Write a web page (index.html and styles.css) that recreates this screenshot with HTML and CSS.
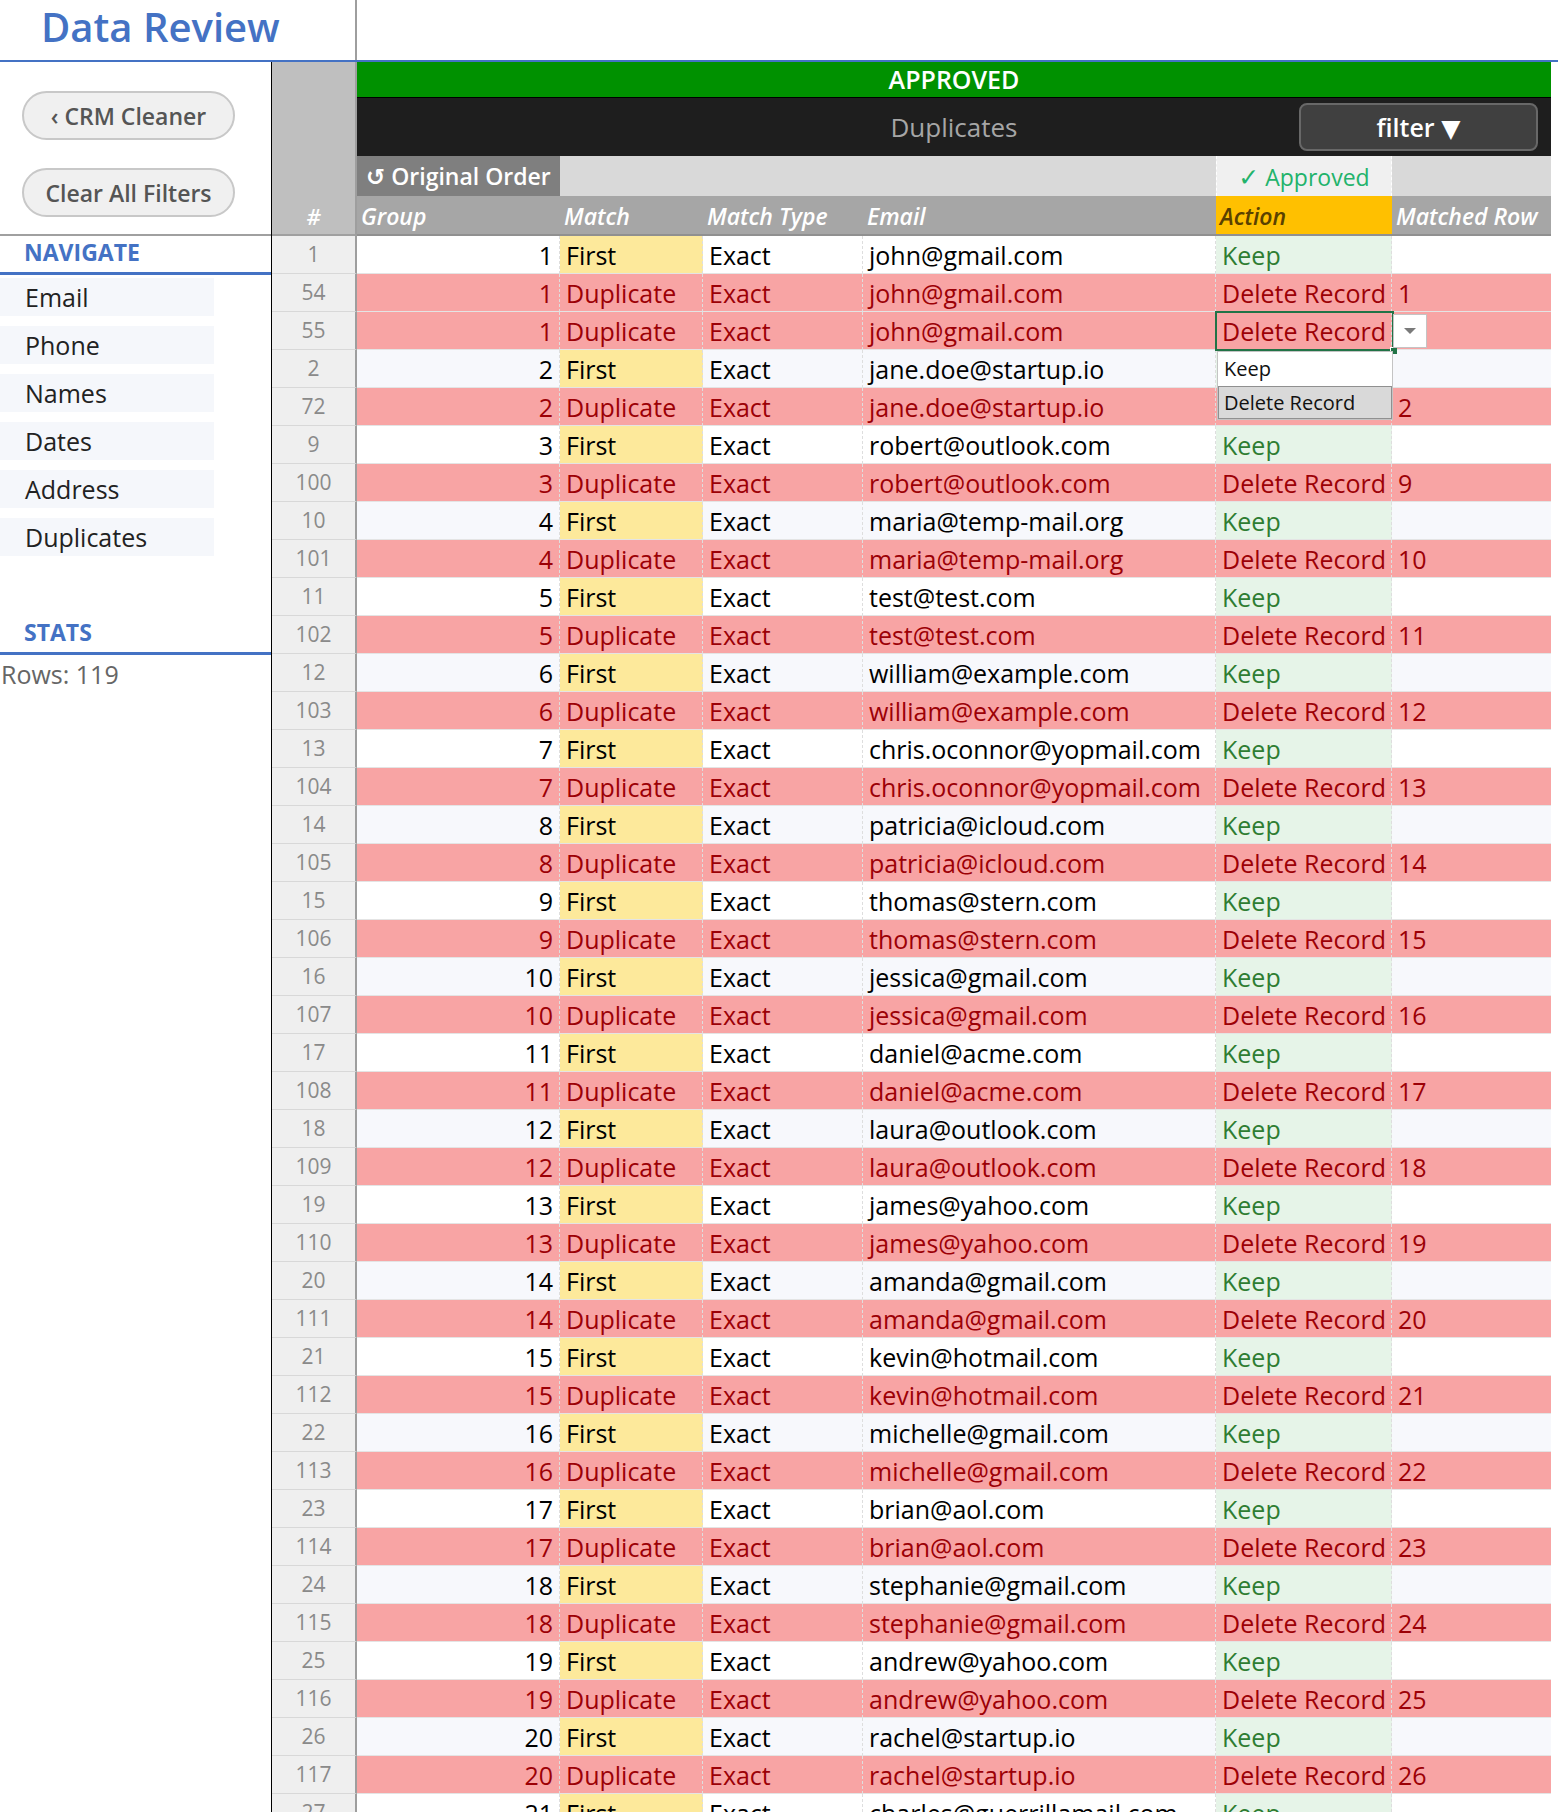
FILE: index.html
```html
<!DOCTYPE html>
<html>
<head>
    <title>Data Review</title>
    <link rel="stylesheet" href="styles.css">
</head>
<body>
    <div class="topbar">
        <div class="title-cell"><h1>Data Review</h1></div>
    </div>

    <div class="main">
        <div class="sidebar">
            <div class="side-buttons">
                <button class="pill">&lsaquo; CRM Cleaner</button>
                <button class="pill">Clear All Filters</button>
            </div>
            <div class="side-head">NAVIGATE</div>
            <ul class="nav">
                <li>Email</li>
                <li>Phone</li>
                <li>Names</li>
                <li>Dates</li>
                <li>Address</li>
                <li>Duplicates</li>
            </ul>
            <div class="side-head stats">STATS</div>
            <div class="stat-line">Rows: 119</div>
        </div>

        <div class="sheet">
            <div class="sheet-head">
                <div class="corner">#</div>
                <div class="status-bar">APPROVED</div>
                <div class="title-bar">
                    <span></span>
                    <span class="sheet-title">Duplicates</span>
                    <button class="filter-btn">filter &#9660;</button>
                </div>
                <div class="orig-btn">&#8634; Original Order</div>
                <div class="orig-fill wide"></div>
                <div class="approved-cell"><b class="tick">&#10003;</b> Approved</div>
                <div class="orig-fill"></div>
                <div class="col-head">Group</div>
                <div class="col-head">Match</div>
                <div class="col-head">Match Type</div>
                <div class="col-head">Email</div>
                <div class="col-head action">Action</div>
                <div class="col-head">Matched Row</div>
            </div>

            <div class="rows">
                <div class="row first"><span class="num">1</span><span class="grp">1</span><span class="mt">First</span><span class="ty">Exact</span><span class="em">john@gmail.com</span><span class="ac">Keep</span><span class="rf"></span></div>
                <div class="row dup"><span class="num">54</span><span class="grp">1</span><span class="mt">Duplicate</span><span class="ty">Exact</span><span class="em">john@gmail.com</span><span class="ac">Delete Record</span><span class="rf">1</span></div>
                <div class="row dup"><span class="num">55</span><span class="grp">1</span><span class="mt">Duplicate</span><span class="ty">Exact</span><span class="em">john@gmail.com</span><span class="ac">Delete Record</span><span class="rf">1</span></div>
                <div class="row first band"><span class="num">2</span><span class="grp">2</span><span class="mt">First</span><span class="ty">Exact</span><span class="em">jane.doe@startup.io</span><span class="ac">Keep</span><span class="rf"></span></div>
                <div class="row dup"><span class="num">72</span><span class="grp">2</span><span class="mt">Duplicate</span><span class="ty">Exact</span><span class="em">jane.doe@startup.io</span><span class="ac">Delete Record</span><span class="rf">2</span></div>
                <div class="row first"><span class="num">9</span><span class="grp">3</span><span class="mt">First</span><span class="ty">Exact</span><span class="em">robert@outlook.com</span><span class="ac">Keep</span><span class="rf"></span></div>
                <div class="row dup"><span class="num">100</span><span class="grp">3</span><span class="mt">Duplicate</span><span class="ty">Exact</span><span class="em">robert@outlook.com</span><span class="ac">Delete Record</span><span class="rf">9</span></div>
                <div class="row first band"><span class="num">10</span><span class="grp">4</span><span class="mt">First</span><span class="ty">Exact</span><span class="em">maria@temp-mail.org</span><span class="ac">Keep</span><span class="rf"></span></div>
                <div class="row dup"><span class="num">101</span><span class="grp">4</span><span class="mt">Duplicate</span><span class="ty">Exact</span><span class="em">maria@temp-mail.org</span><span class="ac">Delete Record</span><span class="rf">10</span></div>
                <div class="row first"><span class="num">11</span><span class="grp">5</span><span class="mt">First</span><span class="ty">Exact</span><span class="em">test@test.com</span><span class="ac">Keep</span><span class="rf"></span></div>
                <div class="row dup"><span class="num">102</span><span class="grp">5</span><span class="mt">Duplicate</span><span class="ty">Exact</span><span class="em">test@test.com</span><span class="ac">Delete Record</span><span class="rf">11</span></div>
                <div class="row first band"><span class="num">12</span><span class="grp">6</span><span class="mt">First</span><span class="ty">Exact</span><span class="em">william@example.com</span><span class="ac">Keep</span><span class="rf"></span></div>
                <div class="row dup"><span class="num">103</span><span class="grp">6</span><span class="mt">Duplicate</span><span class="ty">Exact</span><span class="em">william@example.com</span><span class="ac">Delete Record</span><span class="rf">12</span></div>
                <div class="row first"><span class="num">13</span><span class="grp">7</span><span class="mt">First</span><span class="ty">Exact</span><span class="em">chris.oconnor@yopmail.com</span><span class="ac">Keep</span><span class="rf"></span></div>
                <div class="row dup"><span class="num">104</span><span class="grp">7</span><span class="mt">Duplicate</span><span class="ty">Exact</span><span class="em">chris.oconnor@yopmail.com</span><span class="ac">Delete Record</span><span class="rf">13</span></div>
                <div class="row first band"><span class="num">14</span><span class="grp">8</span><span class="mt">First</span><span class="ty">Exact</span><span class="em">patricia@icloud.com</span><span class="ac">Keep</span><span class="rf"></span></div>
                <div class="row dup"><span class="num">105</span><span class="grp">8</span><span class="mt">Duplicate</span><span class="ty">Exact</span><span class="em">patricia@icloud.com</span><span class="ac">Delete Record</span><span class="rf">14</span></div>
                <div class="row first"><span class="num">15</span><span class="grp">9</span><span class="mt">First</span><span class="ty">Exact</span><span class="em">thomas@stern.com</span><span class="ac">Keep</span><span class="rf"></span></div>
                <div class="row dup"><span class="num">106</span><span class="grp">9</span><span class="mt">Duplicate</span><span class="ty">Exact</span><span class="em">thomas@stern.com</span><span class="ac">Delete Record</span><span class="rf">15</span></div>
                <div class="row first band"><span class="num">16</span><span class="grp">10</span><span class="mt">First</span><span class="ty">Exact</span><span class="em">jessica@gmail.com</span><span class="ac">Keep</span><span class="rf"></span></div>
                <div class="row dup"><span class="num">107</span><span class="grp">10</span><span class="mt">Duplicate</span><span class="ty">Exact</span><span class="em">jessica@gmail.com</span><span class="ac">Delete Record</span><span class="rf">16</span></div>
                <div class="row first"><span class="num">17</span><span class="grp">11</span><span class="mt">First</span><span class="ty">Exact</span><span class="em">daniel@acme.com</span><span class="ac">Keep</span><span class="rf"></span></div>
                <div class="row dup"><span class="num">108</span><span class="grp">11</span><span class="mt">Duplicate</span><span class="ty">Exact</span><span class="em">daniel@acme.com</span><span class="ac">Delete Record</span><span class="rf">17</span></div>
                <div class="row first band"><span class="num">18</span><span class="grp">12</span><span class="mt">First</span><span class="ty">Exact</span><span class="em">laura@outlook.com</span><span class="ac">Keep</span><span class="rf"></span></div>
                <div class="row dup"><span class="num">109</span><span class="grp">12</span><span class="mt">Duplicate</span><span class="ty">Exact</span><span class="em">laura@outlook.com</span><span class="ac">Delete Record</span><span class="rf">18</span></div>
                <div class="row first"><span class="num">19</span><span class="grp">13</span><span class="mt">First</span><span class="ty">Exact</span><span class="em">james@yahoo.com</span><span class="ac">Keep</span><span class="rf"></span></div>
                <div class="row dup"><span class="num">110</span><span class="grp">13</span><span class="mt">Duplicate</span><span class="ty">Exact</span><span class="em">james@yahoo.com</span><span class="ac">Delete Record</span><span class="rf">19</span></div>
                <div class="row first band"><span class="num">20</span><span class="grp">14</span><span class="mt">First</span><span class="ty">Exact</span><span class="em">amanda@gmail.com</span><span class="ac">Keep</span><span class="rf"></span></div>
                <div class="row dup"><span class="num">111</span><span class="grp">14</span><span class="mt">Duplicate</span><span class="ty">Exact</span><span class="em">amanda@gmail.com</span><span class="ac">Delete Record</span><span class="rf">20</span></div>
                <div class="row first"><span class="num">21</span><span class="grp">15</span><span class="mt">First</span><span class="ty">Exact</span><span class="em">kevin@hotmail.com</span><span class="ac">Keep</span><span class="rf"></span></div>
                <div class="row dup"><span class="num">112</span><span class="grp">15</span><span class="mt">Duplicate</span><span class="ty">Exact</span><span class="em">kevin@hotmail.com</span><span class="ac">Delete Record</span><span class="rf">21</span></div>
                <div class="row first band"><span class="num">22</span><span class="grp">16</span><span class="mt">First</span><span class="ty">Exact</span><span class="em">michelle@gmail.com</span><span class="ac">Keep</span><span class="rf"></span></div>
                <div class="row dup"><span class="num">113</span><span class="grp">16</span><span class="mt">Duplicate</span><span class="ty">Exact</span><span class="em">michelle@gmail.com</span><span class="ac">Delete Record</span><span class="rf">22</span></div>
                <div class="row first"><span class="num">23</span><span class="grp">17</span><span class="mt">First</span><span class="ty">Exact</span><span class="em">brian@aol.com</span><span class="ac">Keep</span><span class="rf"></span></div>
                <div class="row dup"><span class="num">114</span><span class="grp">17</span><span class="mt">Duplicate</span><span class="ty">Exact</span><span class="em">brian@aol.com</span><span class="ac">Delete Record</span><span class="rf">23</span></div>
                <div class="row first band"><span class="num">24</span><span class="grp">18</span><span class="mt">First</span><span class="ty">Exact</span><span class="em">stephanie@gmail.com</span><span class="ac">Keep</span><span class="rf"></span></div>
                <div class="row dup"><span class="num">115</span><span class="grp">18</span><span class="mt">Duplicate</span><span class="ty">Exact</span><span class="em">stephanie@gmail.com</span><span class="ac">Delete Record</span><span class="rf">24</span></div>
                <div class="row first"><span class="num">25</span><span class="grp">19</span><span class="mt">First</span><span class="ty">Exact</span><span class="em">andrew@yahoo.com</span><span class="ac">Keep</span><span class="rf"></span></div>
                <div class="row dup"><span class="num">116</span><span class="grp">19</span><span class="mt">Duplicate</span><span class="ty">Exact</span><span class="em">andrew@yahoo.com</span><span class="ac">Delete Record</span><span class="rf">25</span></div>
                <div class="row first band"><span class="num">26</span><span class="grp">20</span><span class="mt">First</span><span class="ty">Exact</span><span class="em">rachel@startup.io</span><span class="ac">Keep</span><span class="rf"></span></div>
                <div class="row dup"><span class="num">117</span><span class="grp">20</span><span class="mt">Duplicate</span><span class="ty">Exact</span><span class="em">rachel@startup.io</span><span class="ac">Delete Record</span><span class="rf">26</span></div>
                <div class="row first"><span class="num">27</span><span class="grp">21</span><span class="mt">First</span><span class="ty">Exact</span><span class="em">charles@guerrillamail.com</span><span class="ac">Keep</span><span class="rf"></span></div>
            </div>

            <!-- active cell + open validation list -->
            <div class="active-cell"><i class="fill-handle"></i></div>
            <div class="list-arrow"><i></i></div>
            <ul class="list-menu">
                <li>Keep</li>
                <li class="picked">Delete Record</li>
            </ul>
        </div>
    </div>
</body>
</html>
```

FILE: styles.css
```css
* {
    box-sizing: border-box;
}

html, body {
    margin: 0;
    padding: 0;
}

body {
    width: 1558px;
    height: 1812px;
    overflow: hidden;
    background-color: #fff;
    font-family: "Open Sans", "Noto Sans", "DejaVu Sans", sans-serif;
    color: #000;
}

button {
    font-family: inherit;
    cursor: pointer;
}

/* top strip */
.topbar {
    display: flex;
    height: 62px;
    border-bottom: 2px solid #4472c4;
}

.title-cell {
    width: 357px;
    border-right: 2px solid #9e9e9e;
    padding-left: 41px;
}

.title-cell h1 {
    margin: 0;
    font-size: 40px;
    font-weight: 600;
    line-height: 54px;
    color: #4472c4;
}

.main {
    display: flex;
}

/* left panel */
.sidebar {
    width: 272px;
    border-right: 1px solid #000;
    flex-shrink: 0;
}

.side-buttons {
    display: flex;
    flex-direction: column;
    gap: 28px;
    height: 174px;
    padding: 29px 0 0 22px;
    border-bottom: 2px solid #a0a0a0;
}

.pill {
    width: 213px;
    height: 49px;
    border: 2px solid #c8c8c8;
    border-radius: 25px;
    background-color: #f0f0f0;
    color: #555;
    font-size: 23px;
    font-weight: 600;
    padding: 0;
}

.side-head {
    height: 39px;
    padding-left: 24px;
    border-bottom: 3px solid #4472c4;
    color: #4472c4;
    font-size: 23px;
    font-weight: 700;
    line-height: 33px;
}

.nav {
    list-style: none;
    margin: 0;
    padding: 3px 0 0 0;
    display: flex;
    flex-direction: column;
    gap: 10px;
}

.nav li {
    width: 214px;
    height: 38px;
    padding-left: 25px;
    background-color: #f5f7fb;
    color: #222;
    font-size: 25px;
    line-height: 39px;
}

.side-head.stats {
    margin-top: 60px;
    line-height: 32px;
}

.stat-line {
    padding-left: 1px;
    color: #666;
    font-size: 25px;
    line-height: 38px;
}

/* sheet */
.sheet {
    position: relative;
    width: 1279px;
}

.sheet-head {
    display: grid;
    grid-template-columns: 85px 203px 143px 160px 353px 176px 159px;
    grid-template-rows: 36px 58px 40px 40px;
}

.corner {
    grid-row: 1 / 5;
    grid-column: 1;
    background-color: #bfbfbf;
    border-right: 2px solid #9e9e9e;
    border-bottom: 2px solid #a0a0a0;
    display: flex;
    align-items: flex-end;
    justify-content: center;
    color: #fff;
    font-size: 22px;
    font-weight: 600;
    font-style: italic;
    line-height: 36px;
}

.status-bar {
    grid-column: 2 / -1;
    background-color: #009100;
    border-bottom: 1px solid #000;
    color: #fff;
    text-align: center;
    font-size: 25px;
    font-weight: 600;
    line-height: 35px;
}

.title-bar {
    grid-column: 2 / -1;
    background-color: #1e1e1e;
    display: grid;
    grid-template-columns: 1fr auto 1fr;
    align-items: center;
}

.sheet-title {
    color: #a6a6a6;
    font-size: 26px;
    font-weight: 500;
}

.filter-btn {
    justify-self: end;
    margin-right: 13px;
    width: 239px;
    height: 48px;
    border: 2px solid #686868;
    border-radius: 8px;
    background-color: #404040;
    color: #fff;
    font-size: 25px;
    font-weight: 600;
    padding: 0;
}

.orig-btn {
    background-color: #7f7f7f;
    color: #fff;
    font-size: 23px;
    font-weight: 600;
    line-height: 40px;
    padding-left: 9px;
    white-space: nowrap;
}

.orig-fill {
    background-color: #d9d9d9;
}

.orig-fill.wide {
    grid-column: 3 / 6;
}

.approved-cell {
    background-color: #f0f0f0;
    border-left: 1px dashed #fff;
    border-right: 1px dashed #fff;
    color: #22b36b;
    text-align: center;
    font-size: 23px;
    line-height: 40px;
}

.tick {
    font-size: 25px;
    font-weight: 700;
}

.col-head {
    background-color: #a6a6a6;
    border-bottom: 2px solid #909090;
    color: #fff;
    font-size: 23px;
    font-weight: 600;
    font-style: italic;
    line-height: 35px;
    padding: 3px 0 0 4px;
    white-space: nowrap;
}

.col-head.action {
    background-color: #ffc000;
    color: #5a4100;
}

/* data rows */
.row {
    display: grid;
    grid-template-columns: 85px 203px 143px 160px 353px 176px 159px;
    height: 38px;
}

.row span {
    border-bottom: 1px solid #e4e4e4;
    border-right: 1px dashed #dedede;
    padding: 2px 6px 0 6px;
    font-size: 25px;
    line-height: 35px;
    white-space: nowrap;
    overflow: hidden;
}

.row .grp {
    text-align: right;
}

.first span {
    background-color: #fff;
    color: #000;
}

.first.band span {
    background-color: #f7f8fc;
}

.first span.mt {
    background-color: #fde99b;
}

.first span.ac {
    background-color: #e6f4e8;
    color: #2e7d32;
}

.dup span {
    background-color: #f8a4a4;
    color: #9c0006;
}

.row span.num {
    background-color: #efefef;
    color: #8a8a8a;
    border-right: 2px solid #9e9e9e;
    border-bottom-color: #d8d8d8;
    text-align: center;
    font-size: 21px;
    padding: 1px 0 0 0;
}

.row span.rf {
    border-right: none;
}

/* open dropdown on row 55 */
.active-cell {
    position: absolute;
    left: 943px;
    top: 249px;
    width: 179px;
    height: 40px;
    border: 2px solid #217346;
}

.fill-handle {
    position: absolute;
    right: -5px;
    bottom: -5px;
    width: 7px;
    height: 7px;
    background-color: #217346;
    border-left: 1px solid #fff;
    border-top: 1px solid #fff;
}

.list-arrow {
    position: absolute;
    left: 1121px;
    top: 252px;
    width: 34px;
    height: 34px;
    background-color: #fff;
    border: 1px solid #c4c4c4;
    display: flex;
    align-items: center;
    justify-content: center;
}

.list-arrow i {
    width: 0;
    height: 0;
    border-left: 6px solid transparent;
    border-right: 6px solid transparent;
    border-top: 6px solid #7a7a7a;
}

.list-menu {
    position: absolute;
    left: 945px;
    top: 289px;
    width: 176px;
    margin: 0;
    padding: 0;
    list-style: none;
    background-color: #fff;
    border: 1px solid #c4c4c4;
}

.list-menu li {
    height: 34px;
    padding-left: 6px;
    font-size: 20px;
    line-height: 34px;
    color: #111;
}

.list-menu li.picked {
    background-color: #d9d9d9;
    border: 1px solid #909090;
    padding-left: 5px;
    line-height: 32px;
    height: 33px;
}
```
